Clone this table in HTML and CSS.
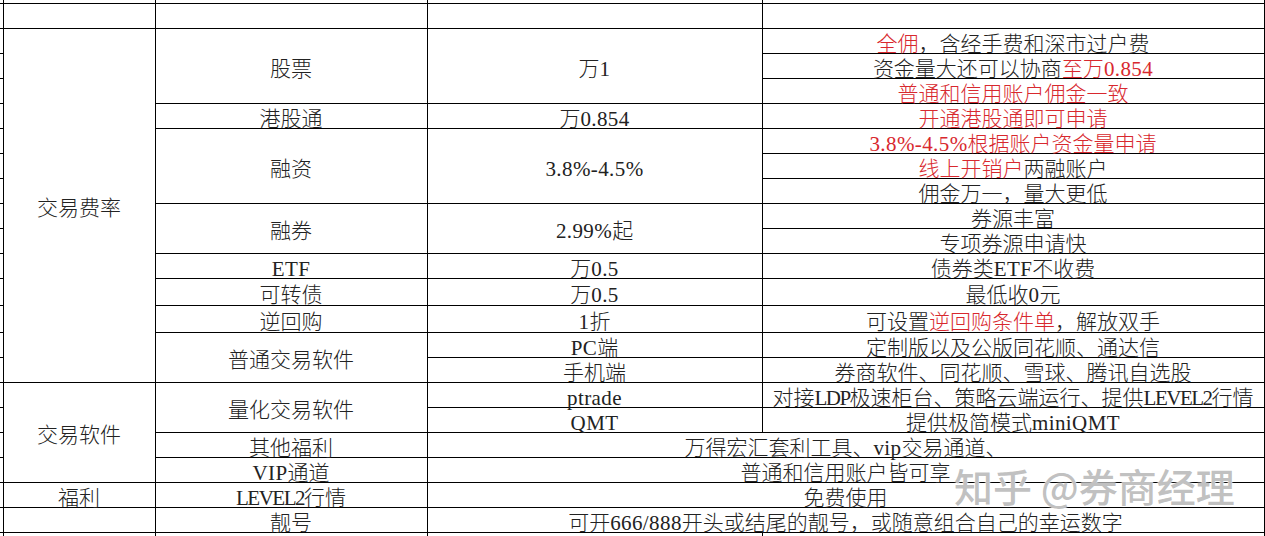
FILE: index.html
```html
<!DOCTYPE html>
<html lang="zh-CN">
<head>
<meta charset="utf-8">
<title>交易费率</title>
<link rel="stylesheet" href="styles.css">
</head>
<body>
<div class="page">
<table class="sheet">
<colgroup><col class="c0"><col class="c1"><col class="c2"><col class="c3"><col class="c4"><col class="c5"></colgroup>
<tr class="edge-top"><td class="x0"></td><td></td><td></td><td></td><td></td><td class="x5"></td></tr>
<tr><td class="x0"></td><td></td><td></td><td></td><td></td><td class="x5"></td></tr>
<tr><td class="x0"></td><td rowspan="14">交易费率</td><td rowspan="3">股票</td><td rowspan="3">万<span class="n">1</span></td><td><span class="red">全佣</span>，含经手费和深市过户费</td><td class="x5"></td></tr>
<tr><td class="x0"></td><td>资金量大还可以协商<span class="red">至万<span class="n">0.854</span></span></td><td class="x5"></td></tr>
<tr><td class="x0"></td><td class="red">普通和信用账户佣金一致</td><td class="x5"></td></tr>
<tr><td class="x0"></td><td>港股通</td><td>万<span class="n">0.854</span></td><td class="red">开通港股通即可申请</td><td class="x5"></td></tr>
<tr><td class="x0"></td><td rowspan="3">融资</td><td rowspan="3"><span class="n">3.8%-4.5%</span></td><td class="red"><span class="n">3.8%-4.5%</span>根据账户资金量申请</td><td class="x5"></td></tr>
<tr><td class="x0"></td><td><span class="red">线上开销户</span>两融账户</td><td class="x5"></td></tr>
<tr><td class="x0"></td><td>佣金万一，量大更低</td><td class="x5"></td></tr>
<tr><td class="x0"></td><td rowspan="2">融券</td><td rowspan="2"><span class="n">2.99%</span>起</td><td>券源丰富</td><td class="x5"></td></tr>
<tr><td class="x0"></td><td>专项券源申请快</td><td class="x5"></td></tr>
<tr><td class="x0"></td><td><span class="n">ETF</span></td><td>万<span class="n">0.5</span></td><td>债券类<span class="n">ETF</span>不收费</td><td class="x5"></td></tr>
<tr class="tall"><td class="x0"></td><td>可转债</td><td>万<span class="n">0.5</span></td><td>最低收<span class="n">0</span>元</td><td class="x5"></td></tr>
<tr class="tall"><td class="x0"></td><td>逆回购</td><td><span class="n">1</span>折</td><td>可设置<span class="red">逆回购条件单</span>，解放双手</td><td class="x5"></td></tr>
<tr><td class="x0"></td><td rowspan="2">普通交易软件</td><td><span class="n">PC</span>端</td><td>定制版以及公版同花顺、通达信</td><td class="x5"></td></tr>
<tr><td class="x0"></td><td>手机端</td><td>券商软件、同花顺、雪球、腾讯自选股</td><td class="x5"></td></tr>
<tr><td class="x0"></td><td rowspan="4">交易软件</td><td rowspan="2">量化交易软件</td><td><span class="n">ptrade</span></td><td>对接<span class="cap">LDP</span>极速柜台、策略云端运行、提供<span class="cap">LEVEL2</span>行情</td><td class="x5"></td></tr>
<tr><td class="x0"></td><td><span class="n">QMT</span></td><td>提供极简模式<span class="n">miniQMT</span></td><td class="x5"></td></tr>
<tr><td class="x0"></td><td>其他福利</td><td colspan="2">万得宏汇套利工具、<span class="n">vip</span>交易通道、</td><td class="x5"></td></tr>
<tr><td class="x0"></td><td><span class="n">VIP</span>通道</td><td colspan="2">普通和信用账户皆可享</td><td class="x5"></td></tr>
<tr><td class="x0"></td><td>福利</td><td><span class="cap">LEVEL2</span>行情</td><td colspan="2">免费使用</td><td class="x5"></td></tr>
<tr><td class="x0"></td><td></td><td>靓号</td><td colspan="2">可开<span class="n">666/888</span>开头或结尾的靓号，或随意组合自己的幸运数字</td><td class="x5"></td></tr>
<tr class="edge-bot"><td class="x0"></td><td></td><td></td><td></td><td></td><td class="x5"></td></tr>
</table>
<div class="watermark">知乎 @券商经理</div>
</div>
</body>
</html>
```
FILE: styles.css
```css
html, body {
  margin: 0;
  padding: 0;
  background: #fff;
}
body {
  width: 1265px;
  height: 536px;
  overflow: hidden;
}
.page {
  position: relative;
  width: 1265px;
  height: 536px;
  overflow: hidden;
}
.sheet {
  border-collapse: collapse;
  table-layout: fixed;
  width: 1275px;
  font-family: "Liberation Serif", "Noto Sans CJK SC", serif;
  font-size: 21px;
  font-weight: 300;
  line-height: 17px;
  color: #222;
}
.c0 { width: 3px; }
.c1 { width: 152px; }
.c2 { width: 272px; }
.c3 { width: 335px; }
.c4 { width: 502px; }
.c5 { width: 11px; }
.sheet tr { height: 25px; }
.sheet tr.tall { height: 27px; }
.sheet tr.edge-top { height: 3px; }
.sheet tr.edge-bot { height: 4px; }
.sheet td {
  border: 1px solid #000;
  padding: 7px 0 0 0;
  text-align: center;
  vertical-align: middle;
  white-space: nowrap;
}
.sheet tr.edge-top td,
.sheet tr.edge-bot td { padding: 0; }
.sheet td.x0 { border-left: none; padding: 0; }
.sheet td.x5 { border-right: none; padding: 0; }
.sheet tr.edge-top td { border-top: none; }
.sheet tr.edge-bot td { border-bottom: none; }
.red { color: #d8282e; }
.n { letter-spacing: 0.4px; }
.cap { letter-spacing: -1.5px; }
.watermark {
  position: absolute;
  left: 954px;
  top: 462px;
  font-family: "Noto Sans CJK SC", sans-serif;
  font-size: 39px;
  font-weight: 500;
  line-height: 46px;
  color: rgba(140, 140, 140, 0.55);
  text-shadow: 0 0 1px #fff, 0 0 2px #fff;
  white-space: nowrap;
}
```
